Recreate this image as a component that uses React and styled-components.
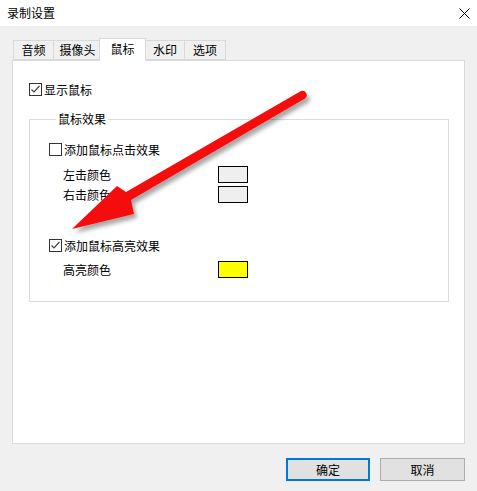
import React from "react";
import styled, {createGlobalStyle} from "styled-components";

const GlobalStyle = createGlobalStyle`
  body {
    margin: 0;
    background: #f0f0f0;
    font-family: "Noto Sans CJK SC", "Noto Sans", sans-serif;
    font-size: 12px;
    color: #000;
  }
  * {
    box-sizing: border-box;
  }
`;

const Window = styled.div`
  position: relative;
  width: 477px;
  height: 491px;
  overflow: hidden;
  background: #f0f0f0;
`;

const TitleBar = styled.div`
  height: 26px;
  background: #fff;
  display: flex;
  align-items: center;
  justify-content: space-between;
  padding: 0 7px;
  line-height: 14px;
`;

const Body = styled.div`
  padding: 12px 12px 0 12px;
`;

const TabRow = styled.div`
  display: flex;
  align-items: flex-end;
  height: 22px;
  padding-left: 1px;
`;

const Tab = styled.div`
  position: relative;
  width: ${props => props.w}px;
  height: ${props => (props.active ? 23 : 20)}px;
  margin: ${props => (props.active ? "0 -1px -1px -2px" : "0 -1px 0 0")};
  z-index: ${props => (props.active ? 2 : 1)};
  background: ${props => (props.active ? "#fff" : "#f0f0f0")};
  border: 1px solid #d9d9d9;
  border-bottom: ${props => (props.active ? "none" : "1px solid #d9d9d9")};
  display: flex;
  justify-content: center;
  padding-top: ${props => (props.active ? 3 : 2)}px;
  line-height: 14px;
`;

const Panel = styled.div`
  height: 384px;
  background: #fff;
  border: 1px solid #d9d9d9;
  padding: 22px 16px 0 16px;
`;

const CheckRow = styled.div`
  display: flex;
  align-items: center;
  gap: 2px;
  height: 13px;
  line-height: 13px;
  margin-top: ${props => props.top || 0}px;
`;

const Box = styled.span`
  width: 13px;
  height: 13px;
  border: 1px solid #333;
  background: #fff;
  display: flex;
  align-items: center;
  justify-content: center;
  flex-shrink: 0;
`;

const Group = styled.fieldset`
  margin: 16px 0 0 0;
  width: 420px;
  height: 190px;
  border: 1px solid #dcdcdc;
  padding: 0 0 0 19px;
`;

const Legend = styled.legend`
  margin-left: 7px;
  padding: 0 2px;
  line-height: 14px;
`;

const ColorGrid = styled.div`
  display: grid;
  grid-template-columns: 155px 30px;
  row-gap: 3px;
  margin-top: ${props => props.top}px;
  padding-left: 14px;
  align-items: center;
`;

const Swatch = styled.div`
  width: 30px;
  height: 17px;
  border: 1px solid #000;
  background: ${props => props.color};
`;

const ButtonRow = styled.div`
  display: flex;
  justify-content: flex-end;
  gap: 10px;
  margin-top: 14px;
`;

const Button = styled.div`
  width: ${props => props.w}px;
  height: 23px;
  background: #e1e1e1;
  border: ${props => (props.primary ? "2px solid #0078d7" : "1px solid #adadad")};
  display: flex;
  align-items: center;
  justify-content: center;
  line-height: 14px;
`;

const Overlay = styled.svg`
  position: absolute;
  left: 0;
  top: 0;
  pointer-events: none;
`;

const CheckBox = ({checked, children, top}) => (
  <CheckRow top={top}>
    <Box>
      {checked && (
        <svg width="11" height="11" viewBox="0 0 11 11">
          <polyline points="1.5,5.5 4,8 9.5,2" fill="none" stroke="#444" strokeWidth="1.2" />
        </svg>
      )}
    </Box>
    <span>{children}</span>
  </CheckRow>
);

const tabs = [
  {name: "音频", w: 41},
  {name: "摄像头", w: 49},
  {name: "鼠标", w: 47, active: true},
  {name: "水印", w: 40},
  {name: "选项", w: 42},
];

export default function App() {
  return (
    <Window>
      <GlobalStyle />
      <TitleBar>
        <span>录制设置</span>
        <svg width="11" height="11" viewBox="0 0 11 11">
          <path d="M0.5 0.5 L10.5 10.5 M10.5 0.5 L0.5 10.5" stroke="#000" strokeWidth="1" />
        </svg>
      </TitleBar>
      <Body>
        <TabRow>
          {tabs.map(t => (
            <Tab key={t.name} w={t.w} active={t.active}>{t.name}</Tab>
          ))}
        </TabRow>
        <Panel>
          <CheckBox checked>显示鼠标</CheckBox>
          <Group>
            <Legend>鼠标效果</Legend>
            <CheckBox top={17}>添加鼠标点击效果</CheckBox>
            <ColorGrid top={10}>
              <span>左击颜色</span>
              <Swatch color="#efefef" />
              <span>右击颜色</span>
              <Swatch color="#efefef" />
            </ColorGrid>
            <CheckBox checked top={36}>添加鼠标高亮效果</CheckBox>
            <ColorGrid top={9}>
              <span>高亮颜色</span>
              <Swatch color="#ffff00" />
            </ColorGrid>
          </Group>
        </Panel>
        <ButtonRow>
          <Button w={84} primary>确定</Button>
          <Button w={85}>取消</Button>
        </ButtonRow>
      </Body>
      <Overlay width="477" height="491" viewBox="0 0 477 491">
        <defs>
          <filter id="shadow" x="-10%" y="-10%" width="130%" height="140%">
            <feDropShadow dx="3" dy="4" stdDeviation="2" floodColor="#000" floodOpacity="0.35" />
          </filter>
        </defs>
        <path
          d="M72 229 L117 186 L126 192 L301 91 A4.3 4.3 0 0 1 305 98.5 L131 200 L134 214 Z"
          fill="#f51111"
          filter="url(#shadow)"
        />
      </Overlay>
    </Window>
  );
}
